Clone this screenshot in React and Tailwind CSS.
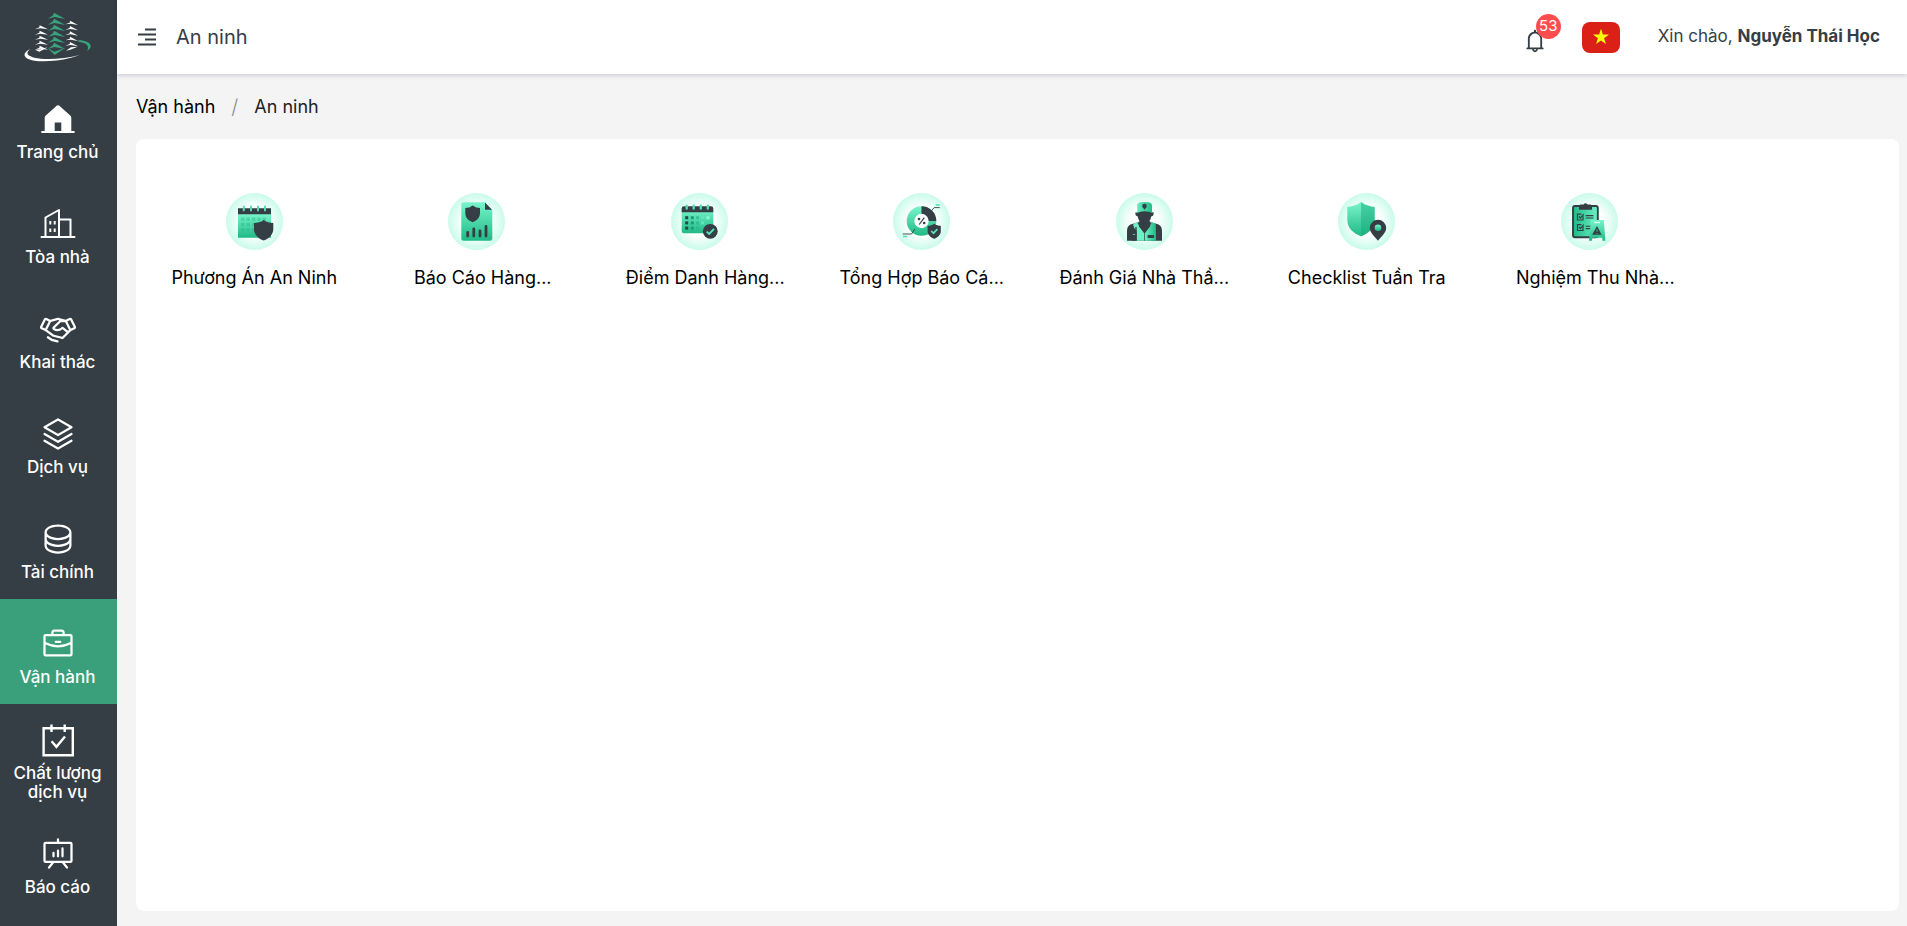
import React from "react";
import {
  PiHandshake,
  PiStack,
  PiDatabase,
  PiBriefcase,
  PiPresentationChart,
} from "react-icons/pi";
import { AiOutlineBell } from "react-icons/ai";

const DARK = "#343e44";

function Logo() {
  const middle = [22, 40, 58, 76, 94, 112];
  const left = [60, 76, 91, 106, 121];
  const right = [46, 62, 78, 94, 110];
  return (
    <svg viewBox="27 20 201 150" className="h-[50px] w-[67px]" role="img" aria-label="Logo">
      <g fill="#3aa27d">
        {middle.map((y) => (
          <path key={y} d={`M117 ${y} L151 ${y + 19} L119 ${y + 13} L99 ${y + 18} L114 ${y + 8} Z`} />
        ))}
        <path d="M98 128 L118 139 L151 127 L119 149 Z" />
        <path d="M190 104 C212 106 227 112 227 122 C227 128 224 131 216 137 C222 126 222 113 190 109 Z" />
      </g>
      <g fill="#fff">
        {left.map((y) => (
          <path key={y} d={`M74 ${y} L99 ${y + 12} L76 ${y + 9} L60 ${y + 12} L73 ${y + 6} Z`} />
        ))}
        <path d="M60 133 L75 132 L98 126 L73 139 Z" />
        {right.map((y) => (
          <path key={y} d={`M165 ${y} L189 ${y + 13} L167 ${y + 9} L151 ${y + 11} L164 ${y + 6} Z`} />
        ))}
        <path d="M153 136 L168 126 L188 124 L166 133 Z" />
        <path d="M46 131 C22 141 20 160 58 166 C105 171 160 163 194 149 C150 161 90 165 58 157 C33 150 33 141 46 131 Z" />
      </g>
    </svg>
  );
}

function HouseIcon() {
  return (
    <svg viewBox="-2 -2 36 36" className="size-9" fill="currentColor" aria-hidden="true">
      <path d="M14.900 2.600Q16 1.700 17.100 2.600L28.500 12.800Q29.300 13.600 29.300 14.700V28H32Q32.800 28.200 32.800 29T32 30H0Q-.8 29.800-.8 29T0 28H2.700V14.700Q2.700 13.600 3.500 12.800ZM12.700 19.500V28H19.300V19.500Z" fillRule="evenodd" />
    </svg>
  );
}

function BuildingIcon() {
  return (
    <svg viewBox="-2 -2 36 36" className="size-9" fill="none" stroke="currentColor" strokeWidth="2" strokeLinejoin="round" aria-hidden="true">
      <path d="M-.5 29H32.500M3.500 29V9.500L17 2V29M17 11.500H28.500V29" strokeLinecap="round" />
      <path d="M8.300 13v3.500M12.700 13v3.500M8.300 20.500V24M12.700 20.500V24" />
    </svg>
  );
}

function CalendarCheckIcon() {
  return (
    <svg viewBox="-2 -2 36 36" className="size-9" fill="none" stroke="currentColor" strokeWidth="2.400" aria-hidden="true">
      <path d="M1.600 4.300H30.800V31.200H1.600ZM9.500 .5V8M22.700 .5V8" />
      <path d="M9.600 17.200 14.400 22.800 23 12.500" />
    </svg>
  );
}

const nav = [
  { label: "Trang chủ", icon: <HouseIcon /> },
  { label: "Tòa nhà", icon: <BuildingIcon /> },
  { label: "Khai thác", icon: <PiHandshake className="size-9" /> },
  { label: "Dịch vụ", icon: <PiStack className="size-9" /> },
  { label: "Tài chính", icon: <PiDatabase className="size-9" /> },
  { label: "Vận hành", icon: <PiBriefcase className="size-9" />, active: true },
  { label: "Chất lượng dịch vụ", icon: <CalendarCheckIcon /> },
  { label: "Báo cáo", icon: <PiPresentationChart className="size-9" /> },
];

function Disc({ children }) {
  return (
    <svg viewBox="0 0 57 57" className="size-[57px]" aria-hidden="true">
      <circle cx="28.500" cy="28.500" r="28.500" fill="url(#disc)" />
      {children}
    </svg>
  );
}

function Gradients() {
  return (
    <svg className="absolute size-0" aria-hidden="true">
      <defs>
        <radialGradient id="disc">
          <stop offset="0.500" stopColor="#fdfffe" />
          <stop offset="1" stopColor="#c9fbeb" />
        </radialGradient>
        <linearGradient id="green" x1="0" y1="0" x2="0" y2="1">
          <stop offset="0" stopColor="#79f5cb" />
          <stop offset="1" stopColor="#20b986" />
        </linearGradient>
        <linearGradient id="greenSide" x1="0" y1="0" x2="1" y2="0">
          <stop offset="0" stopColor="#20b986" />
          <stop offset="1" stopColor="#6ff0c5" />
        </linearGradient>
        <linearGradient id="greenBack" x1="0" y1="0" x2="1" y2="0">
          <stop offset="0" stopColor="#6ff0c5" />
          <stop offset="1" stopColor="#20b986" />
        </linearGradient>
      </defs>
    </svg>
  );
}

function PlanIcon() {
  return (
    <Disc>
      <path d="M12 21H45V44.700H12Z" fill="url(#green)" />
      <path d="M12 15.300H45V21.300H12Z" fill={DARK} />
      <path d="M17.800 12.700V18.300M25 12.700V18.300M32 12.700V18.300M39 12.700V18.300" stroke="#4fdcae" strokeWidth="2" />
      <g fill="#1fae80" opacity=".35">
        {[24.500, 29.800, 35].map((y) =>
          [15, 20.500, 26, 31.300, 36.600].map((x) => <rect key={`${x}-${y}`} x={x} y={y} width="3.400" height="3.400" />)
        )}
      </g>
      <path d="M37.700 27C40.500 29.200 44 30 47.300 30V36C47.300 41.500 43 45.500 37.700 47.500C32.300 45.500 28 41.500 28 36V30C31.300 30 35 29.200 37.700 27Z" fill={DARK} />
    </Disc>
  );
}

function ReportIcon() {
  return (
    <Disc>
      <path d="M15.500 9.300H36.700L44.300 17V45.500Q44.300 47.700 42.100 47.700H15.500Q13.300 47.700 13.300 45.500V11.500Q13.300 9.300 15.500 9.300Z" fill="url(#green)" />
      <path d="M37 9.500 44 16.800H37Z" fill={DARK} />
      <path d="M24.700 12.500C27 14.200 29.500 15 32 15V20C32 24.500 29 27.500 24.700 29.200C20.300 27.500 17.300 24.500 17.300 20V15C20 15 22.500 14.200 24.700 12.500Z" fill={DARK} />
      <path d="M19.700 39.500V43M25.800 36V43M32 38V43M38 33.500V43" stroke={DARK} strokeWidth="2.800" strokeLinecap="round" />
    </Disc>
  );
}

function AttendanceIcon() {
  return (
    <Disc>
      <rect x="10.700" y="15" width="31.600" height="25.300" rx="2.200" fill="url(#green)" />
      <path d="M10.700 19.200V15.500Q10.700 13.300 13 13.300H40Q42.300 13.300 42.300 15.500V19.200Z" fill={DARK} />
      <path d="M15.700 12.700V15.500M22.700 12.700V15.500M29.800 12.700V15.500M36.800 12.700V15.500" stroke="#4fdcae" strokeWidth="2.400" strokeLinecap="round" />
      {[23.200, 28.400, 33.600].map((y, row) => (
        <g key={y}>
          <rect x="14.200" y={y} width="3" height="3" fill={DARK} />
          <rect x="19.800" y={y} width="3" height="3" fill="#1b9d74" />
          <rect x="25" y={y} width="3" height="3" fill="#26b889" opacity=".7" />
          {row < 2 && <rect x="30.200" y={y} width="3" height="3" fill="#64e5bc" />}
          {row === 0 && <rect x="35.500" y={y} width="3" height="3" fill="#8df7d5" />}
        </g>
      ))}
      <circle cx="39.300" cy="38.300" r="7.400" fill={DARK} />
      <path d="M35.700 38.600 38.200 41 43 35.900" fill="none" stroke="#5be7ba" strokeWidth="1.900" />
    </Disc>
  );
}

function SummaryIcon() {
  return (
    <Disc>
      <circle cx="28.500" cy="28" r="14.800" fill="url(#green)" />
      <path d="M28.500 28V13.200A14.800 14.800 0 0 1 43.300 28Z" fill={DARK} />
      <circle cx="28.500" cy="28" r="7.200" fill="#fbfffd" />
      <g stroke={DARK} fill="none">
        <path d="M26.200 31.500 31.300 24.600" strokeWidth="1.200" />
        <path d="M9.700 41H18.500L21.800 36M38.500 17.600 41.200 14.600H46.700" strokeWidth=".9" />
      </g>
      <circle cx="26" cy="26" r="1.300" fill={DARK} />
      <circle cx="31.200" cy="30" r="1.300" fill={DARK} />
      <path d="M10 43.500H14.200M42.700 12H46.700" stroke="#4fe0b1" strokeWidth="1.300" />
      <path d="M41.200 30.800C43.200 32.200 45.500 32.800 47.800 32.800V38C47.800 42 45 44.400 41.200 45.700C37.400 44.400 34.600 42 34.600 38V32.800C37 32.800 39.200 32.200 41.200 30.800Z" fill={DARK} />
      <path d="M38.200 38 40.500 40.200 44.400 36.200" fill="none" stroke="#5be7ba" strokeWidth="1.700" />
    </Disc>
  );
}

function GuardIcon() {
  return (
    <Disc>
      <path d="M19.400 19.600Q28.500 15.600 37.700 19.600L37.500 22Q36.500 23.400 35.200 23.600Q34.800 26.500 33.500 28V31H23.500V28Q22.200 26.500 21.800 23.600Q20.500 23.400 19.500 22Z" fill={DARK} />
      <path d="M21.200 18.700V12.800C21.200 9.600 24 9 28.500 9S36 9.600 36 12.800V18.700Q37.200 19.200 37 20.300Q28.500 16.300 20.100 20.300Q20 19.200 21.200 18.700Z" fill="url(#greenBack)" />
      <circle cx="28.500" cy="13" r="2.300" fill={DARK} />
      <path d="M27 14.500H30L28.500 16.800Z" fill={DARK} />
      <path d="M11 47.700V38Q11 31.500 17 30.800L21 29.500H36L40 30.800Q46 31.500 46 38V47.700Z" fill={DARK} />
      <path d="M17.200 30.700 21 29.300 28.200 40V47.700H20.500V37Q17.500 36 17.200 30.700Z" fill="#6ff0c5" />
      <path d="M39.800 30.700 36 29.300 28.900 40V47.700H40Z" fill="url(#greenBack)" />
      <path d="M22.500 28.500H34.500L34 33.500L28.500 40.500L23 33.500Z" fill={DARK} />
      <path d="M31.600 42H38V45H31.600Z" fill={DARK} />
      <path d="M15.500 39H20.800V47.700H15.500Z" fill={DARK} />
      <path d="M20 34V39" stroke={DARK} strokeWidth="1.300" />
      <path d="M16.800 41.500H19.200" stroke="#4fdcae" strokeWidth=".8" />
    </Disc>
  );
}

function PatrolIcon() {
  return (
    <Disc>
      <path d="M23 9C27.500 12.300 32 13.700 36.700 14V27C36.700 35 31 40 23 43.300C15 40 9.300 35 9.300 27V14C14 13.700 18.500 12.300 23 9Z" fill="url(#green)" />
      <path d="M23 9C27.500 12.300 32 13.700 36.700 14V27C36.700 35 31 40 23 43.300Z" fill="#18ab7b" opacity=".5" />
      <path d="M40 26.800A8.200 8.200 0 0 1 48.200 35C48.200 40 43 43.500 40 47.800C37 43.500 31.800 40 31.800 35A8.200 8.200 0 0 1 40 26.800Z" fill={DARK} />
      <circle cx="40" cy="34.700" r="3.300" fill="url(#green)" />
    </Disc>
  );
}

function AcceptanceIcon() {
  return (
    <Disc>
      <rect x="12" y="13" width="24.800" height="31.300" rx="2" fill="url(#greenSide)" stroke={DARK} strokeWidth="1.900" />
      <path d="M18 13Q18 11.500 19.500 11.500H22.500Q24.500 8.800 26.500 11.500H29.500Q31 11.500 31 13V16.800H18Z" fill={DARK} />
      <g fill="none" stroke={DARK}>
        <path d="M22 22.500V27H16.500V21.200H20.500M22 33V37.500H16.500V31.700H20.500" strokeWidth="1.200" />
        <path d="M18 23.500 19.500 25 22.700 21M18 34 19.500 35.500 22.700 31.500" strokeWidth="1.200" />
        <path d="M24.700 22.600H32.400M24.700 25H32.400M24.700 33.200H30M24.700 35.600H30" strokeWidth="1.100" />
      </g>
      <path d="M29.800 27H42.800L44.400 47.700H41.500L41.200 44.800H31.300L31 47.700H28Z" fill="url(#green)" />
      <path d="M33.500 29.500H39" stroke="#e6fff6" strokeWidth="1.400" />
      <path d="M36 33 40.600 41.700H31.200Z" fill={DARK} />
      <path d="M36 36V39M36 40V41" stroke="#3bc999" strokeWidth=".8" />
    </Disc>
  );
}

// `hanging` labels end in an ellipsis that sits outside the centred words.
const features = [
  { label: "Phương Án An Ninh", icon: <PlanIcon /> },
  { label: "Báo Cáo Hàng...", icon: <ReportIcon />, hanging: true },
  { label: "Điểm Danh Hàng...", icon: <AttendanceIcon />, hanging: true },
  { label: "Tổng Hợp Báo Cá...", icon: <SummaryIcon /> },
  { label: "Đánh Giá Nhà Thầ...", icon: <GuardIcon /> },
  { label: "Checklist Tuần Tra", icon: <PatrolIcon /> },
  { label: "Nghiệm Thu Nhà...", icon: <AcceptanceIcon />, hanging: true },
];

function Sidebar() {
  return (
    <aside className="w-[117px] shrink-0 bg-[#343e44] text-white">
      <a href="#home" className="flex h-[74px] items-center justify-center pr-0.5">
        <Logo />
      </a>
      <nav>
        {nav.map((item) => (
          <a
            key={item.label}
            href="#nav"
            aria-current={item.active ? "page" : undefined}
            className={`flex h-[105px] flex-col items-center justify-center gap-1.5 pt-2.5 pr-0.5 text-center text-[17px] leading-[19px] font-medium ${item.active ? "bg-[#3a9f7b]" : ""}`}
          >
            {item.icon}
            <span className="px-2">{item.label}</span>
          </a>
        ))}
      </nav>
    </aside>
  );
}

function Header() {
  return (
    <header className="relative flex h-[74px] shrink-0 items-center bg-white pr-[27px] pl-5 text-[#343e44] shadow-[0_1px_5px_rgba(0,21,61,0.2)]">
      <button type="button" aria-label="Menu" className="flex size-5 items-center justify-center">
        <svg viewBox="0 0 20 20" className="size-5" stroke="currentColor" strokeWidth="1.800" aria-hidden="true">
          <path d="M8 2.500H19M1 7.500H19M8 12.500H19M1 17.500H19" />
        </svg>
      </button>
      <h1 className="ml-[19px] text-xl">An ninh</h1>
      <div className="ml-auto flex items-center">
        <button type="button" aria-label="Thông báo" className="relative mt-2 mr-[34px]">
          <AiOutlineBell className="size-[26px]" />
          <span className="absolute -top-[14px] left-[14px] flex size-[25px] items-center justify-center rounded-full bg-[#ff4d4f] text-[15px] text-white">
            53
          </span>
        </button>
        <button type="button" aria-label="Tiếng Việt" className="mr-[38px] flex h-[31px] w-[38px] items-center justify-center rounded-lg bg-[#da2017]">
          <svg viewBox="0 0 20 20" className="size-[18px]" fill="#ff0" aria-hidden="true">
            <path d="M10 .8 12.100 7.300H18.900L13.400 11.300 15.500 17.900 10 13.800 4.500 17.900 6.600 11.300 1.100 7.300H7.900Z" />
          </svg>
        </button>
        <p className="text-[17px]">
          Xin chào, <strong className="font-bold">Nguyễn Thái Học</strong>
        </p>
      </div>
    </header>
  );
}

export default function App() {
  return (
    <div className="flex min-h-screen bg-[#f4f4f4] font-['Inter','Noto_Sans',sans-serif]">
      <Gradients />
      <Sidebar />
      <div className="flex min-w-0 flex-1 flex-col">
        <Header />
        <main className="flex flex-1 flex-col pr-2 pb-[15px] pl-[19px]">
          <nav aria-label="Breadcrumb" className="flex h-[65px] items-center gap-4 text-lg">
            <a href="#operations" className="text-black">Vận hành</a>
            <span className="text-xl font-light text-[#8c8c8c]">/</span>
            <span className="text-[#222]">An ninh</span>
          </nav>
          <section className="flex-1 rounded-lg bg-white pt-[54px] pl-[7px]">
            <ul className="grid w-[88.7%] grid-cols-7">
              {features.map((f) => (
                <li key={f.label}>
                  <a href="#feature" className="flex flex-col items-center gap-3.5 text-lg leading-7 whitespace-nowrap text-black">
                    {f.icon}
                    <span className={f.hanging ? "pl-3" : ""}>{f.label}</span>
                  </a>
                </li>
              ))}
            </ul>
          </section>
        </main>
      </div>
    </div>
  );
}
